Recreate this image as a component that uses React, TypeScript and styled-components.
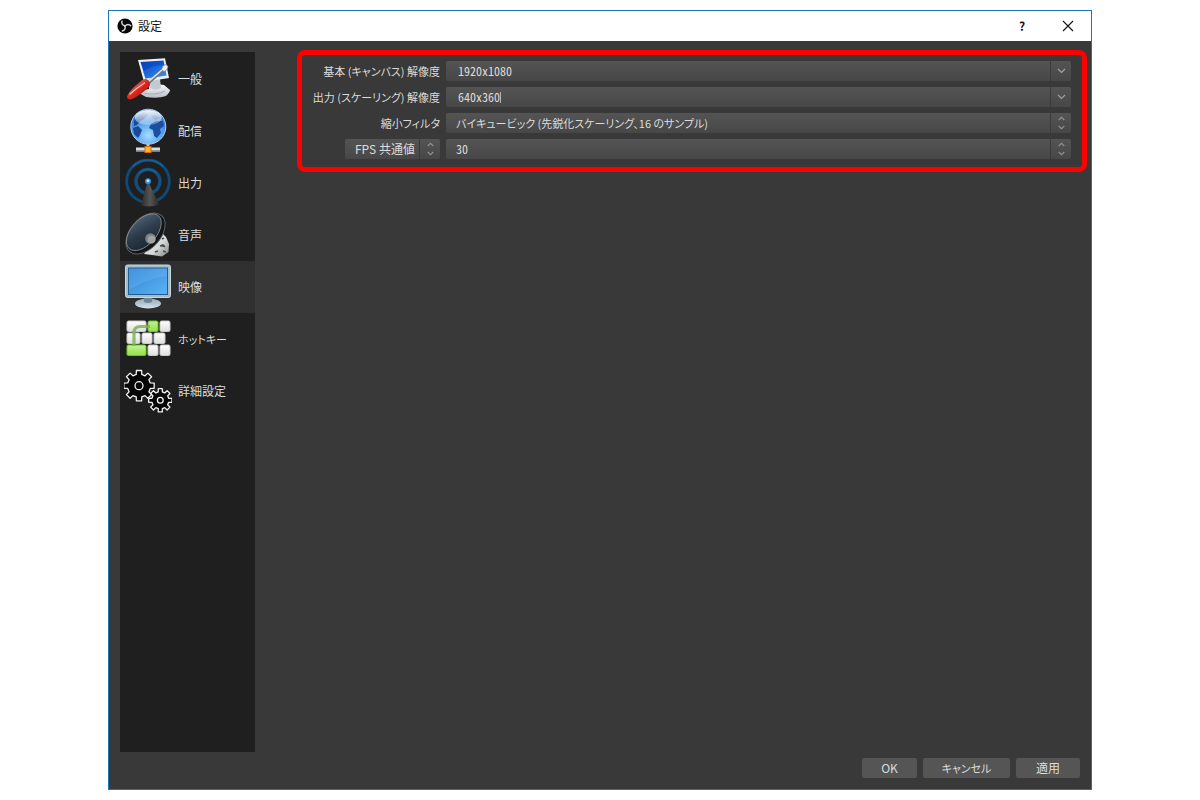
import React from "react";
import styled, { createGlobalStyle } from "styled-components";

const GlobalStyle = createGlobalStyle`
  *, *::before, *::after { box-sizing: border-box; }
  body {
    margin: 0;
    background: #fff;
    font-family: "Noto Sans CJK JP", sans-serif;
    font-size: 12px;
    line-height: 20px;
    font-feature-settings: "palt";
  }
  button, input, select { font: inherit; font-feature-settings: inherit; color: inherit; }
`;

const Desktop = styled.div`
  display: flex;
  min-height: 100vh;
  padding: 10px 9%;
`;

const DialogWindow = styled.main`
  flex: 1;
  min-width: 0;
  display: flex;
  flex-direction: column;
  border: 1px solid #1c75b4;
  background: #393939;
  color: #dcdcdc;
`;

const TitleBar = styled.header`
  display: flex;
  align-items: center;
  height: 30px;
  padding: 0 0 0 8px;
  background: #fff;
  color: #111;
`;

const Title = styled.h1`
  flex: 1;
  margin: 0 0 0 5px;
  font-size: 12px;
  font-weight: 400;
`;

const TitleButton = styled.button`
  width: 46px;
  height: 30px;
  padding: 0;
  display: flex;
  align-items: center;
  justify-content: center;
  border: 0;
  background: none;
  font-weight: 700;
`;

const Body = styled.div`
  flex: 1;
  display: flex;
  padding: 11px 0 6px 11px;
`;

const Sidebar = styled.nav`
  flex: none;
  width: 135px;
  padding: 1px 0;
  background: #1f1f1f;
`;

const NavItem = styled.button<{ $active: boolean; $narrow: boolean }>`
  display: flex;
  align-items: center;
  gap: 6px;
  width: 100%;
  height: 52px;
  padding: 0 4px;
  border: 0;
  text-align: left;
  font-size: ${(p) => (p.$narrow ? 11 : 12)}px;
  background: ${(p) => (p.$active ? "#303030" : "transparent")};
`;

const Panel = styled.section`
  flex: 1;
  min-width: 0;
  padding: 0 4px 0 42px;
`;

const VideoForm = styled.form`
  display: grid;
  grid-template-columns: 138px minmax(0, 1fr);
  gap: 6px;
  margin-top: -2px;
  padding: 6px 11px 8px 0;
  border: 5px solid #fe0000;
  border-radius: 8px;
`;

const Label = styled.label`
  font-size: 11px;
  text-align: right;
  white-space: nowrap;
`;

const LabelCell = styled.div`
  display: flex;
  justify-content: flex-end;
`;

const Field = styled.div<{ $width?: string }>`
  display: grid;
  grid-template-columns: minmax(0, 1fr) 21px;
  width: ${(p) => p.$width ?? "auto"};
  height: 20px;
  border-radius: 2px;
  background: linear-gradient(#545454, #474747);
`;

const EditArea = styled.div`
  grid-area: 1 / 1;
  display: flex;
  align-items: center;
  padding-left: 12px;
`;

const TextInput = styled.input`
  field-sizing: content;
  height: 20px;
  padding: 0;
  border: 0;
  outline: 0;
  background: none;
  font-feature-settings: "hwid";
`;

const Caret = styled.span`
  width: 1px;
  height: 11px;
  background: #b4b4b4;
`;

const Select = styled.select<{ $size?: number; $features?: string }>`
  grid-area: 1 / 1 / 2 / 3;
  appearance: none;
  width: 100%;
  height: 20px;
  padding: 0 22px 0 10px;
  border: 0;
  outline: 0;
  background: none;
  font-size: ${(p) => p.$size ?? 12}px;
  font-feature-settings: ${(p) => p.$features ?? '"palt"'};
`;

const Arrow = styled.span`
  grid-area: 1 / 2;
  display: flex;
  align-items: center;
  justify-content: center;
  border-left: 1px solid #3a3a3a;
  color: #929292;
  pointer-events: none;
`;

const ArrowButton = styled.button`
  grid-area: 1 / 2;
  display: flex;
  align-items: center;
  justify-content: center;
  padding: 0;
  border: 0;
  border-left: 1px solid #3a3a3a;
  background: none;
  color: #a2a2a2;
`;

const Footer = styled.footer`
  display: flex;
  justify-content: flex-end;
  gap: 6px;
  padding: 0 11px 11px;
`;

const Button = styled.button<{ $width: number; $size?: number }>`
  width: ${(p) => p.$width}px;
  height: 20px;
  padding: 0;
  border: 0;
  border-radius: 2px;
  background: #555;
  font-size: ${(p) => p.$size ?? 12}px;
`;

const Down = () => (
  <svg width="9" height="6" viewBox="0 0 9 6" fill="none" stroke="currentColor" strokeWidth="1.3">
    <path d="M1 1 4.500 4.400 8 1" />
  </svg>
);

const UpDown = () => (
  <svg width="7" height="14" viewBox="0 0 7 14" fill="none" stroke="currentColor" strokeWidth="1.1">
    <path d="M.7 4 3.500 1.300 6.300 4M.7 10 3.500 12.700 6.300 10" />
  </svg>
);

const CloseIcon = () => (
  <svg width="12" height="12" viewBox="0 0 12 12" stroke="#111" strokeWidth="1.1">
    <path d="M1 1 11 11M11 1 1 11" />
  </svg>
);

const AppIcon = () => (
  <svg width="16" height="16" viewBox="0 0 16 16">
    <circle cx="8" cy="8" r="7.600" fill="#080808" />
    <g fill="none" stroke="#dcdcdc" strokeWidth="1.400" strokeLinecap="round">
      {[0, 120, 240].map((a) => (
        <path key={a} transform={`rotate(${a} 8 8)`} d="M5 3.200C4.200 5.200 5.400 7.400 8 7.800" />
      ))}
    </g>
  </svg>
);

const Icon = ({ children }: { children: React.ReactNode }) => (
  <svg width="48" height="48" viewBox="0 0 48 48" aria-hidden="true">
    {children}
  </svg>
);

const GeneralIcon = () => (
  <Icon>
    <defs>
      <linearGradient id="genScreen" x1="0" y1="0" x2="1" y2="1">
        <stop offset="0" stopColor="#0a3fae" />
        <stop offset=".5" stopColor="#0d55d0" />
        <stop offset="1" stopColor="#48a6ff" />
      </linearGradient>
      <linearGradient id="genHandle" x1="0" y1="0" x2="1" y2="1">
        <stop offset="0" stopColor="#ff8b7c" />
        <stop offset=".5" stopColor="#d9291f" />
        <stop offset="1" stopColor="#8d0f0c" />
      </linearGradient>
      <linearGradient id="genBase" x1="0" y1="0" x2="0" y2="1">
        <stop offset="0" stopColor="#fff" />
        <stop offset="1" stopColor="#b9bfc8" />
      </linearGradient>
    </defs>
    <path d="M25 28 40 30 46 35Q46 37 42 41Q34 44 22 42L15 38Q16 35 25 34Z" fill="url(#genBase)" />
    <path d="M20 38Q30 41 41 36" fill="none" stroke="#a5acb6" />
    <path d="M27 25 36 24 37 33Q32 36 26 33Z" fill="#c4cad3" />
    <path d="M14 5 41 3.300 45 23 20 27Z" fill="#eceff5" />
    <path d="M16.500 7 39.500 5.500 42.500 20.500 21.500 23.500Z" fill="url(#genScreen)" />
    <path d="M19 17Q28 10 40.300 10L42.500 20.500 21.500 23.500Z" fill="#2c7fe8" opacity=".45" />
    <path d="M24 28 39 15" stroke="#6f7680" strokeWidth="3.200" />
    <path d="M23.500 27.500 39 14" stroke="#dfe4ea" strokeWidth="1.600" />
    <path d="M37.500 14.500 39 11 42 9.500 44 11.500 43 14.500 40 16.500Z" fill="#f1f3f6" stroke="#7b828c" strokeWidth=".6" />
    <path d="M3.500 40.500Q5 37 10 32L17 26Q21 22.500 24.500 25.500Q28 29 24.500 32.500L18 38Q9 44.500 6 44.500Q2 44 3.500 40.500Z" fill="url(#genHandle)" />
    <path d="M6 39Q12 33.500 20.500 28" fill="none" stroke="#ffc1b8" strokeWidth="1.300" strokeLinecap="round" />
  </Icon>
);

const StreamIcon = () => (
  <Icon>
    <defs>
      <radialGradient id="globe" cx=".5" cy=".75" r=".75">
        <stop offset="0" stopColor="#a5dcff" />
        <stop offset=".5" stopColor="#5aa2ec" />
        <stop offset="1" stopColor="#2d68c6" />
      </radialGradient>
      <linearGradient id="globeShine" x1="0" y1="0" x2="0" y2="1">
        <stop offset="0" stopColor="#fff" stopOpacity=".95" />
        <stop offset="1" stopColor="#fff" stopOpacity=".25" />
      </linearGradient>
    </defs>
    <path d="M24 37V42" stroke="#b9c2cb" strokeWidth="3" />
    <path d="M12 42.500H36" stroke="#d9dde1" strokeWidth="4" />
    <path d="M12 43.500H36" stroke="#8f969d" strokeWidth="1" />
    <rect x="21" y="39.500" width="6" height="6" fill="#ffb52e" stroke="#d66e08" />
    <circle cx="24.300" cy="19.700" r="17.500" fill="url(#globe)" stroke="#a9d2f8" />
    <path d="M10 14Q13 7 21 5L24 8 20 12 16 14 13 18 10 19ZM9 21 14 19 18 23 16 28 14 31 10 27Z" fill="#174a9a" />
    <path d="M27 17 32 14 39 14 40 19 36 22 37 26 33 31 30 29 29 23 25 21Z" fill="#1b4f9f" />
    <path d="M27 9 32 7 37 11 31 13Z" fill="#27599f" />
    <ellipse cx="24.300" cy="10.500" rx="13.500" ry="7.500" fill="url(#globeShine)" />
  </Icon>
);

const OutputIcon = () => (
  <Icon>
    <defs>
      <linearGradient id="mast" x1="0" y1="0" x2="1" y2="0">
        <stop offset="0" stopColor="#2a2a2a" />
        <stop offset=".5" stopColor="#555" />
        <stop offset="1" stopColor="#292929" />
      </linearGradient>
    </defs>
    <circle cx="24" cy="22.300" r="21.300" fill="none" stroke="#104a75" strokeWidth="2.800" />
    <circle cx="24" cy="22.300" r="12" fill="none" stroke="#12517f" strokeWidth="3.200" />
    <path d="M9 7.500A21.300 21.300 0 0 1 39 7.500M15.500 14A12 12 0 0 1 32.500 14" fill="none" stroke="#145f96" strokeWidth="2" />
    <path d="M23 24H25L35 45.500Q26 49 17 46.500Z" fill="url(#mast)" />
    <circle cx="24" cy="22.300" r="3" fill="#238fe8" />
    <circle cx="24" cy="21.700" r="1.500" fill="#c5e8ff" />
  </Icon>
);

const AudioIcon = () => (
  <Icon>
    <defs>
      <linearGradient id="cone" x1="0" y1=".2" x2="1" y2=".8">
        <stop offset="0" stopColor="#4d6076" />
        <stop offset=".5" stopColor="#2c3a49" />
        <stop offset="1" stopColor="#1a2530" />
      </linearGradient>
      <linearGradient id="magnet" x1="0" y1="0" x2="1" y2="1">
        <stop offset="0" stopColor="#fff" />
        <stop offset=".6" stopColor="#d4d8d7" />
        <stop offset="1" stopColor="#7e8281" />
      </linearGradient>
    </defs>
    <path d="M36 20 42 26 45 33 44.500 41 38 45.500 28 44 20 43Z" fill="url(#magnet)" />
    <path d="M38 28 40 27M36 35 39 34 41 36M31 41 34 40M39 40 42 41" stroke="#4c504f" strokeWidth="1.600" />
    <ellipse cx="21.500" cy="22.500" rx="15" ry="24" transform="rotate(42 21.500 22.500)" fill="#131416" stroke="#5c6264" />
    <ellipse cx="19.800" cy="21.200" rx="12.500" ry="22" transform="rotate(42 19.800 21.200)" fill="url(#cone)" stroke="#8d959a" strokeWidth=".8" />
    <circle cx="26.500" cy="27.500" r="5.300" fill="#7f8285" />
    <circle cx="27.500" cy="28.500" r="3.800" fill="#a0a2a4" />
  </Icon>
);

const VideoIcon = () => (
  <Icon>
    <defs>
      <linearGradient id="vidScreen" x1="0" y1="0" x2="1" y2="1">
        <stop offset="0" stopColor="#2f83d2" />
        <stop offset="1" stopColor="#5db4f4" />
      </linearGradient>
      <linearGradient id="vidBase" x1="0" y1="0" x2="0" y2="1">
        <stop offset="0" stopColor="#91a9b8" />
        <stop offset="1" stopColor="#d4e4ed" />
      </linearGradient>
    </defs>
    <ellipse cx="24" cy="40.500" rx="13" ry="5" fill="url(#vidBase)" />
    <path d="M20 34H28V39Q24 41 20 39Z" fill="#6e8899" />
    <rect x="1.500" y="2" width="45" height="32.500" rx="2" fill="#a5bdcb" stroke="#c6d7e0" />
    <rect x="4.500" y="5" width="39" height="26.500" fill="url(#vidScreen)" stroke="#245d91" />
    <path d="M5 5.500H43V13Q25 15 5 27Z" fill="#8accff" opacity=".2" />
  </Icon>
);

const keyRects: [number, number, number, boolean][] = [
  [3, 6, 19, false], [24, 6, 10, true], [36, 6, 10, false],
  [3, 18, 13, false], [18, 18, 10, false], [30, 18, 11, false],
  [3, 30, 19, true], [24, 30, 10, false], [36, 30, 10, false],
];

const HotkeyIcon = () => (
  <Icon>
    <defs>
      <linearGradient id="keyWhite" x1="0" y1="0" x2="0" y2="1">
        <stop offset="0" stopColor="#fff" />
        <stop offset="1" stopColor="#dedede" />
      </linearGradient>
      <linearGradient id="keyGreen" x1="0" y1="0" x2="0" y2="1">
        <stop offset="0" stopColor="#c4f391" />
        <stop offset="1" stopColor="#93e04c" />
      </linearGradient>
    </defs>
    {keyRects.map(([x, y, w, green]) => (
      <rect
        key={`${x}-${y}`} x={x} y={y} width={w} height="10.500" rx="1.500"
        fill={green ? "url(#keyGreen)" : "url(#keyWhite)"}
        stroke={green ? "#6acb1c" : "#c9c9c9"}
      />
    ))}
    <path d="M10 31V18Q10 11.500 16.500 11.500H26" fill="none" stroke="#7eb356" strokeWidth="3.200" opacity=".85" />
  </Icon>
);

const gearPath = (cx: number, cy: number, outer: number, inner: number) => {
  const points: string[] = [];
  const at = (r: number, a: number) =>
    `${(cx + r * Math.sin(a)).toFixed(2)} ${(cy - r * Math.cos(a)).toFixed(2)}`;
  for (let i = 0; i < 8; i++) {
    const a = (i * Math.PI) / 4;
    points.push(at(inner, a - 0.24), at(outer, a - 0.17), at(outer, a + 0.17), at(inner, a + 0.24));
  }
  return `M${points.join("L")}Z`;
};

const AdvancedIcon = () => (
  <Icon>
    <g fill="#050505" stroke="#f2f2f2" strokeWidth="1.300" strokeLinejoin="round">
      <path d={gearPath(15, 18.7, 15.4, 11.6)} />
      <circle cx="15" cy="18.700" r="4" />
      <path d={gearPath(36.3, 33.3, 11.8, 8.6)} />
      <circle cx="36.300" cy="33.300" r="2.900" />
    </g>
  </Icon>
);

const sections = [
  { label: "一般", Glyph: GeneralIcon },
  { label: "配信", Glyph: StreamIcon },
  { label: "出力", Glyph: OutputIcon },
  { label: "音声", Glyph: AudioIcon },
  { label: "映像", Glyph: VideoIcon },
  { label: "ホットキー", Glyph: HotkeyIcon, narrow: true },
  { label: "詳細設定", Glyph: AdvancedIcon },
];

export default function App() {
  return (
    <Desktop>
      <GlobalStyle />
      <DialogWindow>
        <TitleBar>
          <AppIcon />
          <Title>設定</Title>
          <TitleButton type="button">?</TitleButton>
          <TitleButton type="button" aria-label="閉じる"><CloseIcon /></TitleButton>
        </TitleBar>
        <Body>
          <Sidebar>
            {sections.map(({ label, Glyph, narrow = false }) => (
              <NavItem key={label} type="button" $active={label === "映像"} $narrow={narrow}>
                <Glyph />
                {label}
              </NavItem>
            ))}
          </Sidebar>
          <Panel>
            <VideoForm>
              <Label htmlFor="base">基本 (キャンバス) 解像度</Label>
              <Field>
                <EditArea><TextInput id="base" defaultValue="1920x1080" /></EditArea>
                <ArrowButton type="button" aria-label="基本解像度の一覧"><Down /></ArrowButton>
              </Field>
              <Label htmlFor="scaled">出力 (スケーリング) 解像度</Label>
              <Field>
                <EditArea><TextInput id="scaled" defaultValue="640x360" /><Caret /></EditArea>
                <ArrowButton type="button" aria-label="出力解像度の一覧"><Down /></ArrowButton>
              </Field>
              <Label htmlFor="filter">縮小フィルタ</Label>
              <Field>
                <Select id="filter" $size={11}>
                  <option>バイキュービック (先鋭化スケーリング、16 のサンプル)</option>
                </Select>
                <Arrow><UpDown /></Arrow>
              </Field>
              <LabelCell>
                <Field $width="95px">
                  <Select id="fpsType" aria-label="FPS の種類">
                    <option>FPS 共通値</option>
                  </Select>
                  <Arrow><UpDown /></Arrow>
                </Field>
              </LabelCell>
              <Field>
                <Select id="fps" aria-label="FPS 共通値" $features={'"hwid"'}>
                  <option>30</option>
                </Select>
                <Arrow><UpDown /></Arrow>
              </Field>
            </VideoForm>
          </Panel>
        </Body>
        <Footer>
          <Button type="button" $width={55}>OK</Button>
          <Button type="button" $width={87} $size={11}>キャンセル</Button>
          <Button type="button" $width={64}>適用</Button>
        </Footer>
      </DialogWindow>
    </Desktop>
  );
}
